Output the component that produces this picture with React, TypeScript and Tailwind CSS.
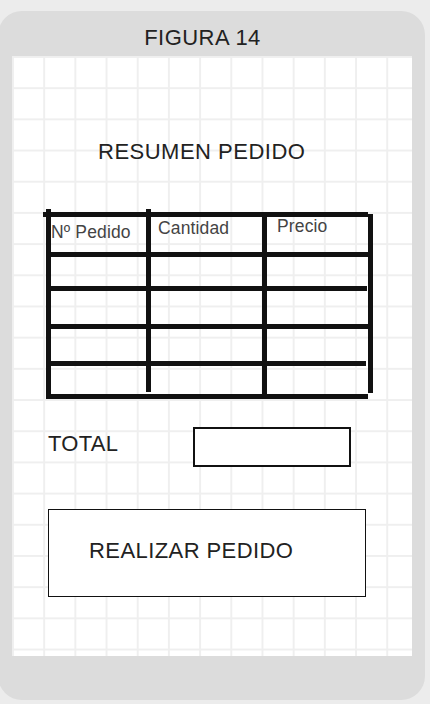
import React from "react";

function TableLines() {
  const c = "#111111";
  return (
    <svg
      className="absolute inset-0"
      width="331"
      height="190"
      viewBox="0 0 331 190"
      aria-hidden="true"
    >
      {/* horizontal lines */}
      <rect x="0" y="3" width="325" height="5" fill={c} />
      <rect x="8" y="43" width="318" height="5" fill={c} />
      <rect x="8" y="77" width="316" height="5" fill={c} />
      <rect x="8" y="115" width="318" height="5" fill={c} />
      <rect x="8" y="152" width="315" height="5" fill={c} />
      <rect x="3" y="185" width="322" height="5" fill={c} />
      {/* vertical lines */}
      <rect x="3" y="0" width="5" height="190" fill={c} />
      <rect x="103" y="0" width="5" height="183" fill={c} />
      <rect x="219" y="3" width="5" height="184" fill={c} />
      <rect x="325" y="5" width="5" height="179" fill={c} />
    </svg>
  );
}

export default function App() {
  return (
    <div
      className="w-[430px] h-[704px] overflow-hidden bg-[#ececec] pt-[11px]"
      style={{ fontFamily: '"Liberation Sans", Arial, sans-serif' }}
    >
      <div className="ml-[-2px] w-[427px] h-[689px] rounded-[24px] bg-[#dcdcdc] flex flex-col">
        <div className="h-[45px] pt-[16px] pr-[18px] text-center text-[22px] leading-[22px] tracking-[0.45px] text-[#222]">
          FIGURA 14
        </div>
        <div className="ml-[14px] w-[400px] h-[600px] bg-white bg-[image:linear-gradient(to_right,#efefef_2px,transparent_2px),linear-gradient(to_bottom,#efefef_2px,transparent_2px)] bg-[length:31.2px_31.2px] flex flex-col">
          <div className="mt-[85px] pl-[86px] text-[22px] leading-[22px] tracking-[0.5px] text-[#222]">
            RESUMEN PEDIDO
          </div>

          <div className="relative mt-[46px] ml-[31px] w-[331px] h-[190px]">
            <TableLines />
            <div className="relative flex items-start text-[17.5px] leading-[18px] tracking-[0.15px] text-[#444]">
              <div className="w-[115px] pl-[8px] pt-[13.5px]">Nº Pedido</div>
              <div className="w-[119px] pt-[10px]">Cantidad</div>
              <div className="pt-[8px]">Precio</div>
            </div>
          </div>

          <div className="mt-[28px] flex items-start">
            <div className="w-[181px] pl-[36px] pt-[6px] text-[22px] leading-[22px] tracking-[0.3px] text-[#222]">
              TOTAL
            </div>
            <div className="w-[158px] h-[40px] border-2 border-[#111] bg-white" />
          </div>

          <div className="mt-[42px] ml-[36px] w-[318px] h-[88px] border border-[#111] bg-white pl-[40px] pt-[30px] text-[22px] leading-[22px] tracking-[0.42px] text-[#222]">
            REALIZAR PEDIDO
          </div>
        </div>
      </div>
    </div>
  );
}
